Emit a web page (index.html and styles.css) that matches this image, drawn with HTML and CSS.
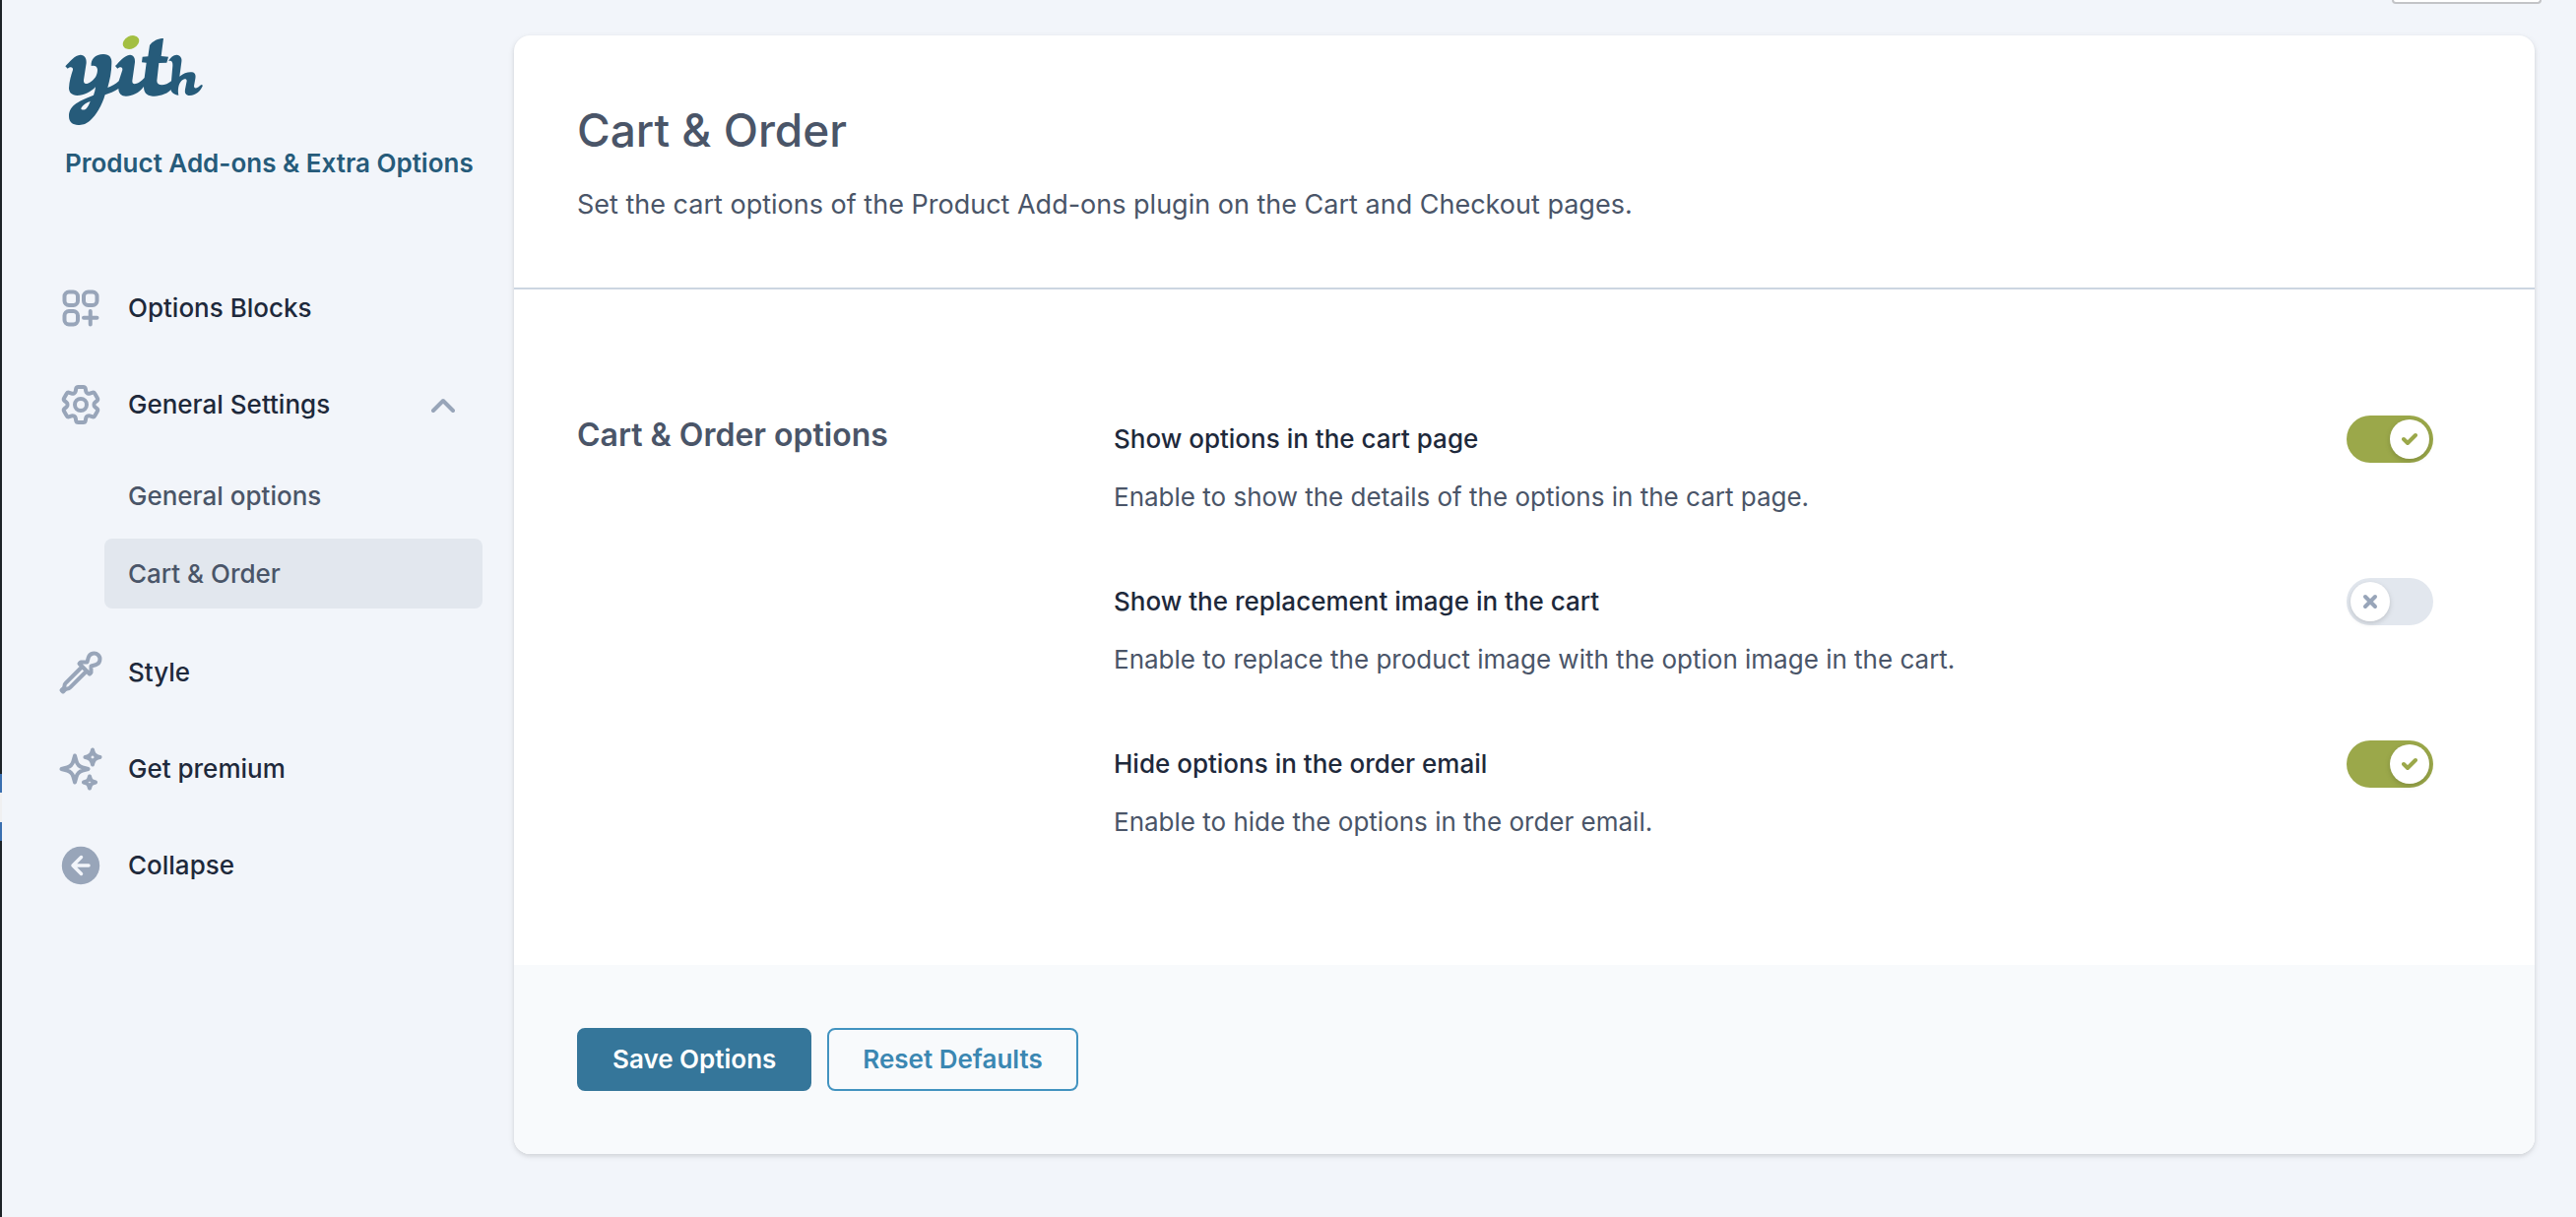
FILE: index.html
```html
<!DOCTYPE html>
<html lang="en">
<head>
<meta charset="utf-8">
<title>Cart &amp; Order – Product Add-ons &amp; Extra Options</title>
<link rel="stylesheet" href="styles.css">
</head>
<body>
<div class="admin-edge"><span class="admin-edge-current"></span></div>
<aside class="sidebar">
  <header class="brand">
    <svg class="logo" viewBox="198 105 423 279" role="img" aria-label="YITH">
      <path d="M199 202C212 188 228 168 245 167C258 167 264 178 263 192L255 244C254 260 266 256 278 248C292 238 297 225 297 212C296 203 290 198 278 201C276 180 290 166 315 165C334 166 341 176 340 192C340 220 334 245 328 267C340 262 352 257 362 247L373 213C374 203 366 203 358 209L351 201C364 188 378 169 396 167C408 168 412 178 411 190L403 246C402 264 425 254 440 237L446 191L432 190L434 173L451 172L456 138C465 125 482 117 498 117L491 171L513 173L508 191L484 192L478 246C478 264 505 262 523 246L522 272C505 290 480 293 465 293C445 292 438 280 438 264C424 284 402 293 384 293C370 293 361 285 361 270C348 279 334 284 320 289C311 320 293 352 275 367C260 380 250 381 238 381C222 380 210 373 210 354C210 318 245 307 285 290C288 282 290 275 291 265C276 281 256 291 235 291C218 290 210 282 210 268C211 248 217 228 222 213C223 204 215 202 206 209ZM275 308C264 313 253 318 247 330C246 335 258 337 263 331C268 325 272 318 275 308Z" fill-rule="evenodd"/>
      <path d="M513 186C520 175 528 167 538 167C550 168 555 178 553 188L547 233C560 222 575 218 585 220C595 222 597 230 595 240L591 262C592 275 604 266 613 258L618 260C612 275 598 290 578 291C566 290 562 284 564 272L569 247C569 238 560 240 553 246C543 256 541 275 544 290C530 289 520 280 520 270L526 200C527 186 520 184 513 186Z"/>
      <ellipse class="logo-dot" cx="399" cy="129" rx="26" ry="19" transform="rotate(-27 399 129)"/>
    </svg>
    <p class="plugin-name">Product Add-ons &amp; Extra Options</p>
  </header>
  <nav class="menu" aria-label="Plugin settings">
    <a class="menu-item" href="#blocks">
      <svg class="icon" viewBox="0 0 24 24"><path d="M13.5 16.875h3.375m0 0h3.375m-3.375 0V13.5m0 3.375v3.375M6 10.5h2.25a2.25 2.25 0 0 0 2.25-2.25V6a2.25 2.25 0 0 0-2.25-2.25H6A2.25 2.25 0 0 0 3.75 6v2.25A2.25 2.25 0 0 0 6 10.5Zm0 9.75h2.25A2.25 2.25 0 0 0 10.5 18v-2.25a2.25 2.25 0 0 0-2.25-2.25H6a2.25 2.25 0 0 0-2.25 2.25V18A2.25 2.25 0 0 0 6 20.25Zm9.75-9.75H18a2.25 2.25 0 0 0 2.25-2.25V6A2.25 2.25 0 0 0 18 3.75h-2.25A2.25 2.25 0 0 0 13.5 6v2.25a2.25 2.25 0 0 0 2.25 2.25Z"/></svg>
      <span>Options Blocks</span>
    </a>
    <a class="menu-item" href="#settings">
      <svg class="icon" viewBox="0 0 24 24"><path d="M9.594 3.94c.09-.542.56-.94 1.11-.94h2.593c.55 0 1.02.398 1.11.94l.213 1.281c.063.374.313.686.645.87.074.04.147.083.22.127.325.196.72.257 1.075.124l1.217-.456a1.125 1.125 0 0 1 1.37.49l1.296 2.247a1.125 1.125 0 0 1-.26 1.431l-1.003.827c-.293.241-.438.613-.43.992a7.723 7.723 0 0 1 0 .255c-.008.378.137.75.43.991l1.004.827c.424.35.534.955.26 1.43l-1.298 2.247a1.125 1.125 0 0 1-1.369.491l-1.217-.456c-.355-.133-.75-.072-1.076.124a6.47 6.47 0 0 1-.22.128c-.331.183-.581.495-.644.869l-.213 1.281c-.09.543-.56.94-1.11.94h-2.594c-.55 0-1.019-.398-1.11-.94l-.213-1.281c-.062-.374-.312-.686-.644-.87a6.52 6.52 0 0 1-.22-.127c-.325-.196-.72-.257-1.076-.124l-1.217.456a1.125 1.125 0 0 1-1.369-.49l-1.297-2.247a1.125 1.125 0 0 1 .26-1.431l1.004-.827c.292-.24.437-.613.43-.991a6.932 6.932 0 0 1 0-.255c.007-.38-.138-.751-.43-.992l-1.004-.827a1.125 1.125 0 0 1-.26-1.43l1.297-2.247a1.125 1.125 0 0 1 1.37-.491l1.216.456c.356.133.751.072 1.076-.124.072-.044.146-.086.22-.128.332-.183.582-.495.644-.869l.214-1.28Z"/><path d="M15 12a3 3 0 1 1-6 0 3 3 0 0 1 6 0Z"/></svg>
      <span>General Settings</span>
      <svg class="chevron" viewBox="0 0 24 24"><path d="M2 18 12 8l10 10"/></svg>
    </a>
    <div class="submenu">
      <a class="submenu-item" href="#general">General options</a>
      <a class="submenu-item is-current" href="#cart" aria-current="page">Cart &amp; Order</a>
    </div>
    <a class="menu-item" href="#style">
      <svg class="icon" viewBox="0 0 24 24"><path d="m15 11.25 1.5 1.5.75-.75V8.758l2.276-.61a3 3 0 1 0-3.675-3.675l-.61 2.277H12l-.75.75 1.5 1.5M15 11.25l-8.47 8.47c-.34.34-.8.53-1.28.53s-.94.19-1.28.53l-.97.97-.75-.75.97-.97c.34-.34.53-.8.53-1.28s.19-.94.53-1.28L12.75 9M15 11.25 12.75 9"/></svg>
      <span>Style</span>
    </a>
    <a class="menu-item" href="#premium">
      <svg class="icon" viewBox="0 0 24 24"><path d="M9.813 15.904 9 18.75l-.813-2.846a4.5 4.5 0 0 0-3.09-3.09L2.25 12l2.846-.813a4.5 4.5 0 0 0 3.09-3.09L9 5.25l.813 2.846a4.5 4.5 0 0 0 3.09 3.09L15.75 12l-2.846.813a4.5 4.5 0 0 0-3.09 3.09ZM18.259 8.715 18 9.75l-.259-1.035a3.375 3.375 0 0 0-2.455-2.456L14.25 6l1.036-.259a3.375 3.375 0 0 0 2.455-2.456L18 2.25l.259 1.035a3.375 3.375 0 0 0 2.456 2.456L21.75 6l-1.035.259a3.375 3.375 0 0 0-2.456 2.456ZM16.894 20.567 16.5 21.75l-.394-1.183a2.25 2.25 0 0 0-1.423-1.423L13.5 18.75l1.183-.394a2.25 2.25 0 0 0 1.423-1.423l.394-1.183.394 1.183a2.25 2.25 0 0 0 1.423 1.423l1.183.394-1.183.394a2.25 2.25 0 0 0-1.423 1.423Z"/></svg>
      <span>Get premium</span>
    </a>
    <button class="menu-item" type="button">
      <svg class="icon icon-solid" viewBox="0 0 24 24"><circle cx="12" cy="12" r="9.6"/><path d="M16 12H8m4.250-4.250L8 12l4.250 4.250"/></svg>
      <span>Collapse</span>
    </button>
  </nav>
</aside>
<main class="content">
  <div class="screen-tab"></div>
  <form class="panel">
    <header class="panel-header">
      <h1>Cart &amp; Order</h1>
      <p>Set the cart options of the Product Add-ons plugin on the Cart and Checkout pages.</p>
    </header>
    <section class="options">
      <h2>Cart &amp; Order options</h2>
      <div class="option-list">
        <div class="option">
          <label for="show-cart">Show options in the cart page</label>
          <span class="toggle">
            <input type="checkbox" id="show-cart" checked aria-describedby="show-cart-help">
            <svg class="mark mark-on" viewBox="0 0 16 16"><path d="M2 8l4 4 8-8"/></svg>
          </span>
          <p id="show-cart-help">Enable to show the details of the options in the cart page.</p>
        </div>
        <div class="option">
          <label for="show-image">Show the replacement image in the cart</label>
          <span class="toggle">
            <input type="checkbox" id="show-image" aria-describedby="show-image-help">
            <svg class="mark mark-off" viewBox="0 0 16 16"><path d="M3 3l10 10M13 3L3 13"/></svg>
          </span>
          <p id="show-image-help">Enable to replace the product image with the option image in the cart.</p>
        </div>
        <div class="option">
          <label for="hide-email">Hide options in the order email</label>
          <span class="toggle">
            <input type="checkbox" id="hide-email" checked aria-describedby="hide-email-help">
            <svg class="mark mark-on" viewBox="0 0 16 16"><path d="M2 8l4 4 8-8"/></svg>
          </span>
          <p id="hide-email-help">Enable to hide the options in the order email.</p>
        </div>
      </div>
    </section>
    <footer class="panel-footer">
      <button class="button button-primary" type="button">Save Options</button>
      <button class="button button-secondary" type="reset">Reset Defaults</button>
    </footer>
  </form>
</main>
</body>
</html>
```

FILE: styles.css
```css
*, *::before, *::after {
  box-sizing: border-box;
}

body {
  margin: 0;
  min-height: 100vh;
  display: flex;
  background: #f2f5fa;
  color: #1e293b;
  font-family: Inter, "Liberation Sans", sans-serif;
  font-size: 26px;
  line-height: 40px;
}

h1, h2, p {
  margin: 0;
}

/* Edge of the collapsed admin menu, with the current item marked */
.admin-edge {
  width: 2px;
  flex: none;
  padding-top: 786px;
  background: #1d2327;
}

.admin-edge-current {
  display: block;
  height: 68px;
  border: solid #3a6fb0;
  border-width: 19px 0;
  background: #f0f0f1;
}

.sidebar {
  width: 520px;
  flex: none;
  padding: 35px 32px 32px 56px;
}

.brand {
  padding: 0 8px;
}

.logo {
  display: block;
  width: 141px;
  height: 93px;
  fill: #265b7a;
}

.logo-dot {
  fill: #a3bf42;
}

.plugin-name {
  margin-top: 18px;
  color: #265b7a;
  font-weight: 600;
  white-space: nowrap;
}

.menu {
  margin-top: 78px;
}

.menu-item {
  width: 100%;
  height: 98px;
  padding: 0 28px 0 0;
  display: flex;
  align-items: center;
  gap: 24px;
  border: 0;
  background: none;
  color: #1e293b;
  font: inherit;
  font-weight: 500;
  text-decoration: none;
}

.icon, .chevron, .mark {
  fill: none;
  stroke: #98a5b9;
  stroke-width: 2;
  stroke-linecap: round;
  stroke-linejoin: round;
}

.icon {
  width: 48px;
  height: 48px;
}

.icon-solid circle {
  fill: #98a5b9;
  stroke: none;
}

.icon-solid path {
  stroke: #f2f5fa;
  stroke-width: 1.75;
}

.chevron {
  width: 24px;
  height: 24px;
  margin-left: auto;
  stroke-width: 4;
}

.submenu {
  padding: 8px 0 16px 48px;
  display: grid;
  gap: 8px;
}

.submenu-item {
  height: 71px;
  width: 384px;
  padding: 0 24px;
  display: flex;
  align-items: center;
  border-radius: 8px;
  color: #4a5568;
  font-weight: 500;
  text-decoration: none;
}

.submenu-item.is-current {
  background: #e2e7ee;
}

.content {
  flex: 1;
  min-width: 0;
  padding: 0 42px 64px 0;
}

.screen-tab {
  width: 152px;
  height: 4px;
  margin: 0 -7px 32px auto;
  border: solid #c3c4c7;
  border-width: 0 2px 2px;
  border-radius: 0 0 8px 8px;
  background: #fff;
}

.panel {
  border-radius: 16px;
  background: #fff;
  box-shadow: 0 2px 6px rgba(0, 0, 0, .1), 0 2px 4px rgba(0, 0, 0, .06);
  overflow: hidden;
}

.panel-header {
  padding: 64px;
  border-bottom: 2px solid #ccd5e1;
  color: #4a5568;
  font-size: 27px;
}

.panel-header h1 {
  margin-bottom: 24px;
  font-size: 46px;
  font-weight: 500;
  line-height: 64px;
}

.options {
  padding: 128px 103px 125px 64px;
  display: grid;
  grid-template-columns: 545px 1fr;
}

.options h2 {
  color: #4a5568;
  font-size: 32px;
  font-weight: 600;
}

.option-list {
  display: grid;
  gap: 62px;
}

.option {
  display: grid;
  grid-template-columns: 1fr auto;
  row-gap: 15px;
  align-items: center;
}

.option label {
  font-weight: 500;
}

.option p {
  grid-column: 1 / -1;
  color: #4a5568;
}

.toggle {
  position: relative;
  width: 88px;
  height: 48px;
}

.toggle input {
  appearance: none;
  width: 88px;
  height: 48px;
  margin: 0;
  display: flex;
  padding: 4px;
  border-radius: 24px;
  background: #e2e7ee;
}

.toggle input::before {
  content: "";
  width: 40px;
  height: 40px;
  border-radius: 50%;
  background: #fff;
  box-shadow: 0 2px 6px rgba(0, 0, 0, .1), 0 2px 4px rgba(0, 0, 0, .06);
}

.toggle input:checked {
  justify-content: flex-end;
  background: #9ba84a;
}

.mark {
  position: absolute;
  top: 16px;
  width: 16px;
  height: 16px;
  stroke-width: 4;
  pointer-events: none;
}

.mark-on {
  right: 16px;
  stroke: #9ba84a;
}

.mark-off {
  left: 16px;
}

.panel-footer {
  padding: 64px;
  display: flex;
  gap: 16px;
  background: #f8fafc;
}

.button {
  height: 64px;
  padding: 0 34px;
  border: 2px solid #35769a;
  border-radius: 8px;
  font: inherit;
  font-weight: 600;
}

.button-primary {
  background: #35769a;
  color: #fff;
}

.button-secondary {
  border-color: #4293c0;
  background: transparent;
  color: #3b87b2;
}
```
